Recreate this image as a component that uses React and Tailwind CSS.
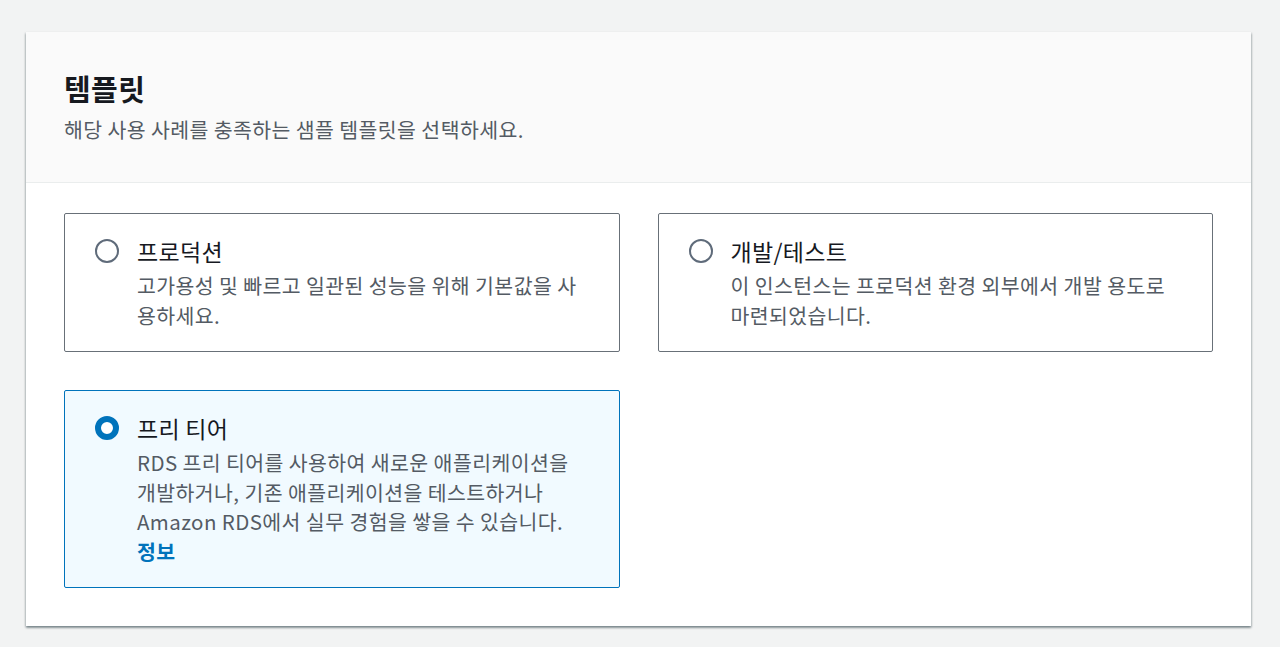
import React, { useState } from "react";

const options = [
  {
    id: "production",
    title: "프로덕션",
    lines: ["고가용성 및 빠르고 일관된 성능을 위해 기본값을 사", "용하세요."],
  },
  {
    id: "devtest",
    title: "개발/테스트",
    lines: ["이 인스턴스는 프로덕션 환경 외부에서 개발 용도로", "마련되었습니다."],
  },
  {
    id: "freetier",
    title: "프리 티어",
    lines: [
      "RDS 프리 티어를 사용하여 새로운 애플리케이션을",
      "개발하거나, 기존 애플리케이션을 테스트하거나",
      "Amazon RDS에서 실무 경험을 쌓을 수 있습니다.",
    ],
    info: true,
  },
];

// Radio button circle
const Radio = ({ checked }) =>
  checked ? (
    <span className="block w-[24px] h-[24px] rounded-full border-[6px] border-[#0073bb] bg-white shrink-0" />
  ) : (
    <span className="block w-[24px] h-[24px] rounded-full border-2 border-[#5f6b7a] bg-white shrink-0" />
  );

const Tile = ({ option, selected, onSelect }) => (
  <div
    onClick={onSelect}
    className={
      selected
        ? "border border-[#0073bb] bg-[#f1faff] rounded-[2px] pl-[30px] pr-[30px] pt-[17px] pb-[20px] cursor-pointer"
        : "border border-[#687078] bg-white rounded-[2px] pl-[30px] pr-[30px] pt-[17px] pb-[21px] cursor-pointer"
    }
  >
    <div className="flex gap-[18px]">
      <div className="h-[40px] flex items-center">
        <Radio checked={selected} />
      </div>
      <div>
        <div className="text-[23px] leading-[40px] tracking-[0.3px] text-[#16191f]">{option.title}</div>
        <div className="text-[20.5px] leading-[29.6px] tracking-[0.4px] text-[#545b64] whitespace-nowrap">
          {option.lines.map((l, i) => (
            <div key={i}>{l}</div>
          ))}
          {option.info && (
            <div>
              <a className="font-bold text-[#0073bb]">정보</a>
            </div>
          )}
        </div>
      </div>
    </div>
  </div>
);

export default function App() {
  const [selected, setSelected] = useState("freetier");

  return (
    <div className="min-h-[647px] bg-[#f2f3f3] pt-[32px] pl-[26px] pb-[20px] font-['Noto_Sans_CJK_KR',sans-serif]">
      <div className="w-[1225px] bg-white shadow-[0_2px_2px_0_rgba(0,28,36,0.35),1px_1px_2px_0_rgba(0,28,36,0.15),-1px_1px_2px_0_rgba(0,28,36,0.15)]">
        <div className="bg-[#fafafa] border-b border-[#eaeded] px-[38px] pt-[38px] pb-[38px]">
          <h2 className="text-[29px] leading-[36px] font-bold tracking-[0.4px] text-[#16191f]">템플릿</h2>
          <p className="mt-[8px] text-[20.5px] leading-[30px] tracking-[0.4px] text-[#545b64]">
            해당 사용 사례를 충족하는 샘플 템플릿을 선택하세요.
          </p>
        </div>
        <div className="px-[38px] pt-[30px] pb-[38px] grid grid-cols-2 gap-x-[38px] gap-y-[38px]">
          {options.map((o) => (
            <Tile
              key={o.id}
              option={o}
              selected={selected === o.id}
              onSelect={() => setSelected(o.id)}
            />
          ))}
        </div>
      </div>
    </div>
  );
}
